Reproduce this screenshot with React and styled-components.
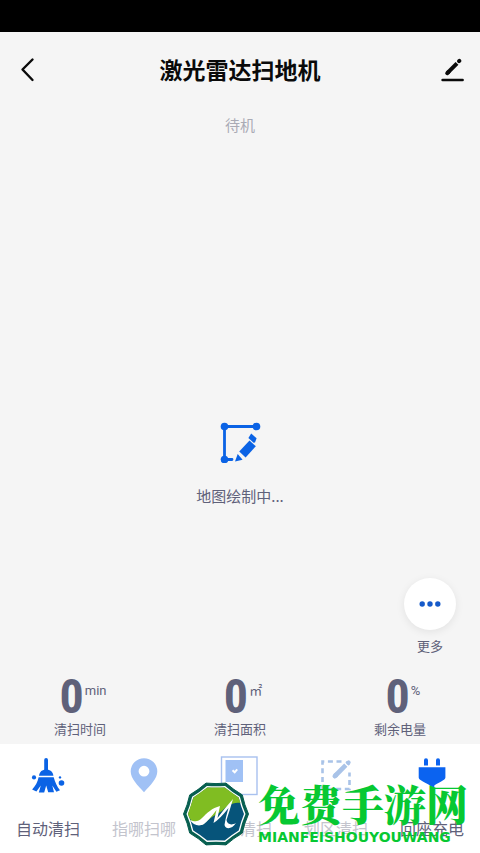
import React from 'react';
import styled, { createGlobalStyle } from 'styled-components';

const GlobalStyle = createGlobalStyle`
  * {
    box-sizing: border-box;
  }

  body {
    margin: 0;
    background: #f5f5f5;
    font-family: Roboto, 'Noto Sans CJK SC', sans-serif;
    color: #5f617a;
  }

  button {
    border: 0;
    padding: 0;
    background: none;
    font-family: inherit;
    color: inherit;
    cursor: pointer;
  }

  svg {
    display: block;
  }
`;

const Page = styled.div`
  position: relative;
  display: flex;
  flex-direction: column;
  min-height: 100vh;
`;

const StatusBar = styled.div`
  height: 32px;
  background: #000;
`;

const Header = styled.header`
  display: flex;
  align-items: center;
  justify-content: space-between;
  height: 76px;
  padding: 0 12px;
`;

const Title = styled.h1`
  margin: 0;
  padding-top: 4px;
  font-size: 23px;
  line-height: 32px;
  font-weight: 700;
  color: #0a0a0a;
`;

const IconButton = styled.button`
  display: flex;
  align-items: center;
  justify-content: center;
  width: 32px;
  height: 32px;
`;

const Status = styled.p`
  margin: 6px 0 0;
  font-size: 15px;
  line-height: 24px;
  text-align: center;
  color: #aaabb5;
`;

const MapArea = styled.main`
  flex: 1;
  display: flex;
  flex-direction: column;
  align-items: center;
  justify-content: flex-end;
  padding-bottom: 70px;
`;

const MapText = styled.p`
  margin: 21px 0 0;
  font-family: 'Noto Sans CJK SC', sans-serif;
  font-size: 15px;
  line-height: 24px;
`;

const More = styled.button`
  display: flex;
  flex-direction: column;
  align-items: center;
  gap: 8px;
  align-self: flex-end;
  margin-right: 24px;
  font-size: 13px;
  line-height: 18px;
`;

const Circle = styled.span`
  display: flex;
  align-items: center;
  justify-content: center;
  width: 52px;
  height: 52px;
  border-radius: 50%;
  background: #fff;
  box-shadow: 0 2px 8px rgba(0, 0, 0, 0.08);
`;

const Stats = styled.section`
  display: grid;
  grid-template-columns: repeat(3, 1fr);
  padding: 20px 0 4px;
`;

const Stat = styled.div`
  display: flex;
  flex-direction: column;
  align-items: center;
  font-size: 13px;
  line-height: 20px;
`;

const Reading = styled.div`
  display: flex;
  gap: 1px;
  height: 44px;
  padding-left: 6px;
`;

const Value = styled.span`
  font-family: 'Roboto Condensed', Roboto, sans-serif;
  font-size: 48px;
  line-height: 42px;
  font-weight: 700;
`;

const Unit = styled.span`
  padding-top: 5px;
  font-size: 13px;
`;

const Nav = styled.nav`
  display: grid;
  grid-template-columns: repeat(5, 1fr);
  height: 109px;
  background: #fff;
`;

const NavButton = styled.button`
  display: flex;
  flex-direction: column;
  align-items: center;
  gap: 22px;
  padding-top: 12px;
  font-size: 16px;
  line-height: 24px;
  color: ${(props) => (props.$dim ? '#c3c4cd' : '#5f617a')};
`;

const Watermark = styled.div`
  position: absolute;
  right: 12px;
  bottom: 5px;
  display: flex;
  align-items: center;
  gap: 8px;
  color: #07c832;
  pointer-events: none;
`;

const SiteName = styled.div`
  font-family: 'Noto Serif CJK SC', 'Noto Sans CJK SC', serif;
  font-size: 42px;
  line-height: 46px;
  font-weight: 900;
`;

const SiteLatin = styled.div`
  font-family: 'DejaVu Sans', sans-serif;
  font-size: 14px;
  line-height: 22px;
  font-weight: 700;
`;

const BackIcon = () => (
  <svg width="32" height="32" viewBox="0 0 32 32" fill="none" stroke="#0a0a0a" strokeWidth="2.4" strokeLinecap="round" strokeLinejoin="round">
    <path d="M20.5 5.5 10.5 15.5 20.5 26" />
  </svg>
);

const EditIcon = () => (
  <svg width="32" height="32" viewBox="0 0 32 32" fill="none" stroke="#0a0a0a" strokeLinecap="round">
    <path d="M11.5 18.8 21 9.4" strokeWidth="4" strokeLinecap="butt" />
    <path d="M11.2 19.2 12.5 18" strokeWidth="4" />
    <path d="M23 7.2 23.4 6.8" strokeWidth="4" />
    <path d="M6.6 26H26.6" strokeWidth="2.6" />
  </svg>
);

const MapIcon = () => (
  <svg width="42" height="42" viewBox="0 0 42 42" fill="#0b63e5">
    <path d="M5.5 5.5H37.5M5.5 5.5V38.5H13" fill="none" stroke="#0b63e5" strokeWidth="2.8" strokeLinecap="round" />
    <circle cx="5.5" cy="5.5" r="3.8" />
    <circle cx="37.5" cy="5.5" r="3.8" />
    <circle cx="5.5" cy="38.5" r="3.8" />
    <path d="M30.5 19.4 36.8 25.3 26.6 36.4 20.2 30.4Z" />
    <path d="M32.2 12.4 37.6 17.2 36 21.4 34.6 21.8 29.4 17Z" />
    <path d="M18.7 33 23.6 38.8 16 40.6Z" />
  </svg>
);

const DotsIcon = () => (
  <svg width="22" height="8" viewBox="0 0 22 8" fill="#165ac9">
    <circle cx="3.2" cy="4" r="2.7" />
    <circle cx="11" cy="4" r="2.7" />
    <circle cx="18.8" cy="4" r="2.7" />
  </svg>
);

const BroomIcon = () => (
  <svg width="40" height="40" viewBox="0 0 40 40" fill="#0b63e5">
    <rect x="16.2" y="2" width="3.8" height="15" rx="1.9" />
    <path d="M11 19.7C11.6 15.8 14.2 13.6 18.2 13.6S24.8 15.8 25.4 19.7Z" />
    <path d="M10.6 21.2H25.7C27.2 26.4 29 30.5 32 34.2L28.4 35.8 24.3 29.5 26 36.3H20.2L18.2 29.6 16.2 36.6H10.8L12.8 29.4 8.4 35.6 4.1 33.6C7.4 30 9.6 26 10.6 21.2Z" />
    <circle cx="6" cy="21.4" r="2.1" />
    <circle cx="32" cy="21.4" r="1.2" />
    <circle cx="33.5" cy="27" r="2.8" />
  </svg>
);

const PinIcon = () => (
  <svg width="40" height="40" viewBox="0 0 40 40" fill="#a0c1f5">
    <path fillRule="evenodd" d="M20 36.2C13.5 29.3 6.7 22.4 6.7 15.5A13.3 13.3 0 0 1 33.3 15.5C33.3 22.4 26.5 29.3 20 36.2ZM20 9.8A5.4 5.4 0 1 0 20 20.6 5.4 5.4 0 0 0 20 9.8Z" />
  </svg>
);

const RoomIcon = () => (
  <svg width="40" height="40" viewBox="0 0 40 40">
    <rect x="1.5" y="1" width="35.5" height="37.5" fill="none" stroke="#a8c1ef" strokeWidth="1.4" />
    <rect x="5.5" y="4" width="17.5" height="22" fill="#a0c1f5" />
    <path d="M12.5 14.2 14.7 16.3 17.2 13.4" fill="none" stroke="#fff" strokeWidth="2" />
  </svg>
);

const ZoneIcon = () => (
  <svg width="40" height="40" viewBox="0 0 40 40" fill="none" stroke="#a9c3e8" strokeWidth="2.6">
    <path d="M25.5 5.5H6.5V33H33.5V16.5" strokeDasharray="5 3.6" />
    <path d="M19 20 29.8 9.2" strokeWidth="4.6" />
    <path d="M18.8 20.2 20 19" strokeWidth="4.6" strokeLinecap="round" />
    <path d="M31 8 32.4 6.6" strokeWidth="4.6" />
    <path d="M32.2 6.8 32.6 6.4" strokeWidth="4" strokeLinecap="round" />
  </svg>
);

const PlugIcon = () => (
  <svg width="40" height="40" viewBox="0 0 40 40" fill="#0b63f0">
    <path d="M12 9.5V4.2A2 2 0 0 1 16 4.2V9.5ZM24 9.5V4.2A2 2 0 0 1 28 4.2V9.5Z" />
    <path d="M6.7 11.2H33.4V21.5C33.4 24.3 27 26 22.3 29.5V40H18V29.5C13 26 6.7 24.3 6.7 21.5Z" />
  </svg>
);

// ten-sided ring with slightly hollow sides
function ring(radius, dip) {
  const point = (r, deg) => {
    const a = (deg * Math.PI) / 180;
    return `${(34 + r * Math.cos(a)).toFixed(1)} ${(34 + r * Math.sin(a)).toFixed(1)}`;
  };
  let d = `M${point(radius, 0)}`;
  for (let i = 0; i < 10; i++) {
    d += `Q${point(radius * 0.95 - dip, i * 36 + 18)} ${point(radius, i * 36 + 36)}`;
  }
  return d + 'Z';
}

const Badge = () => (
  <svg width="68" height="68" viewBox="0 0 68 68">
    <path d={ring(32.5, 1)} fill="#075f50" stroke="#075f50" strokeLinejoin="round" />
    <path d={ring(29.5, 0.8)} fill="#fff" />
    <path d={ring(28, 0.6)} fill="#06547a" />
    <path
      d="M7 37 6 34 11.4 17.5 25.3 7.4H42.7L56.6 17.5 58.5 23C50 22 45 26 40 31L30 37 20 45 10 42Z"
      fill="#80bd22"
    />
    <path
      d="M8 40C13 42 16 42 20 38C25 33 30 28 38 26L35.5 38Q42 29 51 19Q47.5 31 44.5 40C45 44 49 46 54 43C50 49 44 50 42.5 45Q43.5 38 46.5 28Q38 39 31.5 43Q33 36 34.5 30Q27 40 22 44C17 47 11 45 8 40Z"
      fill="#fff"
    />
  </svg>
);

const stats = [
  { label: '清扫时间', unit: 'min' },
  { label: '清扫面积', unit: '㎡' },
  { label: '剩余电量', unit: '%' },
];

const modes = [
  { label: '自动清扫', icon: <BroomIcon /> },
  { label: '指哪扫哪', icon: <PinIcon />, dim: true },
  { label: '选区清扫', icon: <RoomIcon />, dim: true },
  { label: '划区清扫', icon: <ZoneIcon />, dim: true },
  { label: '回座充电', icon: <PlugIcon /> },
];

function App() {
  return (
    <Page>
      <GlobalStyle />
      <StatusBar />

      <Header>
        <IconButton aria-label="返回"><BackIcon /></IconButton>
        <Title>激光雷达扫地机</Title>
        <IconButton aria-label="编辑"><EditIcon /></IconButton>
      </Header>
      <Status>待机</Status>

      {/* Map */}
      <MapArea>
        <MapIcon />
        <MapText>地图绘制中...</MapText>
      </MapArea>

      <More>
        <Circle><DotsIcon /></Circle>
        更多
      </More>

      {/* Readings */}
      <Stats>
        {stats.map((stat) => (
          <Stat key={stat.label}>
            <Reading>
              <Value>0</Value>
              <Unit>{stat.unit}</Unit>
            </Reading>
            {stat.label}
          </Stat>
        ))}
      </Stats>

      <Nav>
        {modes.map((mode) => (
          <NavButton key={mode.label} $dim={mode.dim}>
            {mode.icon}
            {mode.label}
          </NavButton>
        ))}
      </Nav>

      <Watermark>
        <Badge />
        <div>
          <SiteName>免费手游网</SiteName>
          <SiteLatin>MIANFEISHOUYOUWANG</SiteLatin>
        </div>
      </Watermark>
    </Page>
  );
}

export default App;
